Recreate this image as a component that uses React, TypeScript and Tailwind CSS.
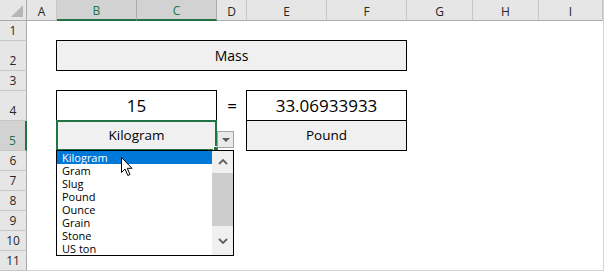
import React from "react";

const cols = ["A", "B", "C", "D", "E", "F", "G", "H", "I"];
const rows = ["1", "2", "3", "4", "5", "6", "7", "8", "9", "10", "11"];
const items = ["Kilogram", "Gram", "Slug", "Pound", "Ounce", "Grain", "Stone", "US ton"];

export default function App() {
  return (
    <div className="w-[604px] h-[271px] bg-white overflow-hidden" style={{ fontFamily: '"Open Sans", "Liberation Sans", sans-serif' }}>
      <div className="relative w-[604px] h-[271px] border-r border-[#d4d4d4]">
        <div className="grid grid-cols-[27px_30px_80px_80px_30px_80px_80px_66px_66px_64px] grid-rows-[21px_20px_30px_20px_30px_30px_20px_20px_20px_20px_20px_20px]">
          {/* corner */}
          <div className="col-start-1 row-start-1 bg-[#e6e6e6] border-r border-b border-[#ababab] relative">
            <div className="absolute right-[3px] bottom-[3px] w-0 h-0 border-l-[12px] border-l-transparent border-b-[12px] border-b-[#b7b7b7]" />
          </div>
          {cols.map((c) => {
            const sel = c === "B" || c === "C";
            return (
              <div
                key={c}
                className={
                  "row-start-1 flex items-center justify-center pt-[3px] text-[12px] border-r " +
                  (sel
                    ? "bg-[#d2d2d2] border-r-[#ababab] border-b-2 border-b-[#217346] text-[#217346]"
                    : "bg-[#e6e6e6] border-r-[#c6c6c6] border-b border-b-[#ababab] text-[#262626]")
                }
              >
                {c}
              </div>
            );
          })}
          {rows.map((r, i) => {
            const sel = r === "5";
            return (
              <div
                key={r}
                style={{ gridRowStart: i + 2 }}
                className={
                  "col-start-1 flex items-end justify-center pb-[2px] text-[12px] leading-[14px] border-b " +
                  (sel
                    ? "bg-[#d2d2d2] border-b-[#c6c6c6] border-r-2 border-r-[#217346] text-[#217346]"
                    : "bg-[#e6e6e6] border-b-[#c6c6c6] border-r border-r-[#ababab] text-[#262626]")
                }
              >
                {r}
              </div>
            );
          })}

          {/* Mass */}
          <div className="col-start-3 col-span-5 row-start-3 -ml-px -mt-px border border-black bg-[#f0f0f0] flex items-center justify-center text-[14px] text-black">
            Mass
          </div>

          {/* 15 */}
          <div className="col-start-3 col-span-2 row-start-5 -ml-px -mt-px border border-black bg-white flex items-center justify-center text-[17px] text-black">
            15
          </div>

          {/* = */}
          <div className="col-start-5 row-start-5 flex items-center justify-center text-[17px] text-black">
            =
          </div>

          {/* Kilogram selected cell */}
          <div className="col-start-3 col-span-2 row-start-6 -ml-px -mt-px border-2 border-[#217346] bg-[#f0f0f0] flex items-center justify-center text-[13.5px] text-black">
            Kilogram
          </div>

          {/* Result */}
          <div className="col-start-6 col-span-2 row-start-5 row-span-2 -ml-px -mt-px border border-black flex flex-col">
            <div className="flex-1 bg-white flex items-center justify-center text-[17px] text-black">33.06933933</div>
            <div className="flex-1 bg-[#f0f0f0] border-t border-black flex items-center justify-center text-[13.5px] text-black">
              Pound
            </div>
          </div>

          {/* bottom line of sheet */}
          <div className="col-start-2 col-span-9 row-start-12 border-b border-[#d4d4d4]" />
        </div>

        {/* fill handle */}
        <div className="absolute left-[213px] top-[146px] w-[6px] h-[6px] bg-[#217346] border border-white" />

        {/* dropdown button */}
        <div className="absolute left-[217px] top-[131px] w-[17px] h-[17px] bg-[#e9e9e9] border border-[#a5a5a5] flex items-center justify-center">
          <div className="w-0 h-0 border-l-[4px] border-r-[4px] border-t-[4px] border-l-transparent border-r-transparent border-t-[#595959]" />
        </div>

        {/* dropdown list */}
        <div className="absolute left-[56px] top-[150px] w-[178px] h-[106px] bg-white border border-black flex">
          <div className="flex-1 flex flex-col text-[11px] leading-[13px] text-black">
            {items.map((it, i) => (
              <div key={it} className={"h-[13px] pl-[5px] " + (i === 0 ? "bg-[#0078d7] text-white" : "")}>
                {it}
              </div>
            ))}
          </div>
          <div className="w-[21px] bg-[#f0f0f0] flex flex-col">
            <div className="h-[22px] flex items-center justify-center">
              <svg width="10" height="6" viewBox="0 0 10 6">
                <path d="M1 5 L5 1 L9 5" fill="none" stroke="#606060" strokeWidth="1.8" />
              </svg>
            </div>
            <div className="h-[53px] bg-[#cdcdcd]" />
            <div className="flex-1 flex items-center justify-center">
              <svg width="10" height="6" viewBox="0 0 10 6">
                <path d="M1 1 L5 5 L9 1" fill="none" stroke="#606060" strokeWidth="1.8" />
              </svg>
            </div>
          </div>
        </div>

        {/* cursor */}
        <svg className="absolute left-[121px] top-[157px]" width="13" height="20" viewBox="0 0 13 20">
          <path d="M0.5 0.5 L0.5 15.5 L4 12 L6.8 18.5 L9 17.5 L6.3 11.3 L11 11.3 Z" fill="white" stroke="black" strokeWidth="1" strokeLinejoin="miter" />
        </svg>
      </div>
    </div>
  );
}
